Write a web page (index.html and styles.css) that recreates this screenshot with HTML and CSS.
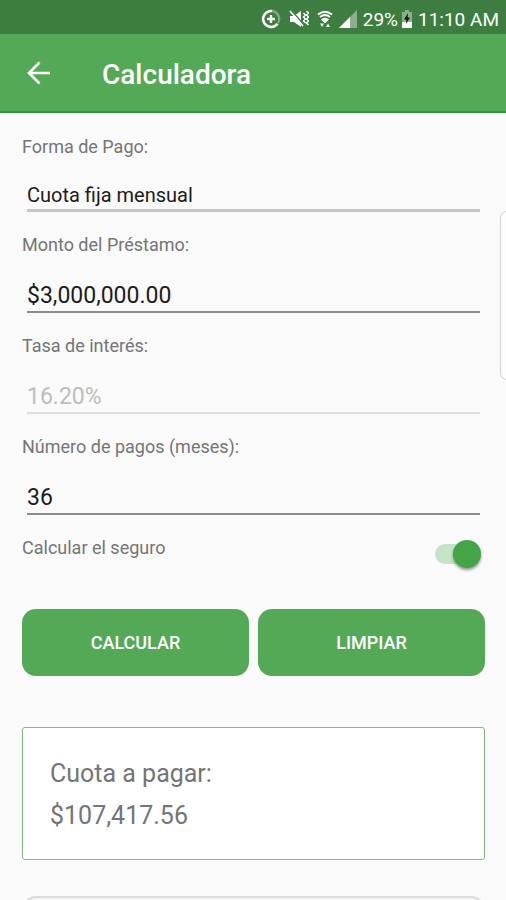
FILE: index.html
```html
<!DOCTYPE html>
<html lang="es">
<head>
    <meta charset="UTF-8">
    <meta name="viewport" content="width=device-width, initial-scale=1.0">
    <title>Calculadora</title>
    <link rel="stylesheet" href="styles.css">
</head>
<body>

    <!-- Barra de estado -->
    <div class="status-bar">
        <svg class="icon-saver" width="20" height="20" viewBox="0 0 20 20" fill="none" stroke="#fff">
            <path d="M11 2A8 8 0 0 1 17 14" stroke-width="2.400" opacity="0.35"/>
            <path d="M11 2A8 8 0 1 0 16.500 14.800" stroke-width="2.600"/>
            <path d="M10 6v8M6 10h8" stroke-width="2.400"/>
        </svg>
        <svg class="icon-mute" width="20" height="18" viewBox="0 0 20 18" fill="#fff">
            <path d="M1 6h4l7-5v16l-7-5H1z"/>
            <path d="M3 1l12 14" stroke="#3d7d40" stroke-width="1.400"/>
            <path d="M1 1l13 15" stroke="#fff" stroke-width="1.600"/>
            <path d="M14.500 3l2 2-2 2 2 2-2 2 2 2M17.500 1l2 2-2 2 2 2-2 2 2 2-2 2 2 2" fill="none" stroke="#fff" stroke-width="1.400"/>
        </svg>
        <svg class="icon-wifi" width="16" height="18" viewBox="0 0 16 18" fill="none" stroke="#fff">
            <path d="M1 4.500Q8-1 15 4.500" stroke-width="2"/>
            <path d="M3 7Q8 3 13 7" stroke-width="1.800"/>
            <path d="M4.500 9.500Q8 6.500 11.500 9.500L8 13z" fill="#fff" stroke-width="1"/>
            <path d="M3 13.500h4L5 17zM9 17h4l-2-3.500z" fill="#fff" stroke="none"/>
        </svg>
        <svg class="icon-signal" width="18" height="18" viewBox="0 0 18 18" fill="#fff">
            <path d="M0 18L18 0v18z" opacity="0.4"/>
            <path d="M0 18L11 7v11z"/>
        </svg>
        <span>29%</span>
        <svg class="icon-battery" width="12" height="18" viewBox="0 0 12 18">
            <path d="M4 0h4v2h3v10H1V2h3z" fill="#fff" opacity="0.4"/>
            <path d="M1 12h10v6H1z" fill="#fff"/>
            <path d="M7 3L3 9.500h2.500L5 14l4-6.500H6.500z" fill="#111"/>
        </svg>
        <span>11:10 AM</span>
    </div>

    <!-- Encabezado -->
    <header class="app-bar">
        <button type="button" class="back-btn" aria-label="Volver">
            <svg width="24" height="24" viewBox="0 0 24 24" fill="none" stroke="#fff" stroke-width="2.600">
                <path d="M23 12H2M12.500 1.500L2 12l10.500 10.500"/>
            </svg>
        </button>
        <h1>Calculadora</h1>
    </header>

    <main class="container">
        <form class="loan-form">
            <div class="field">
                <label for="formaPago">Forma de Pago:</label>
                <select id="formaPago">
                    <option>Cuota fija mensual</option>
                </select>
            </div>
            <div class="field">
                <label for="monto">Monto del Préstamo:</label>
                <input type="text" id="monto" value="$3,000,000.00">
            </div>
            <div class="field">
                <label for="tasa">Tasa de interés:</label>
                <input type="text" id="tasa" value="16.20%" disabled>
            </div>
            <div class="field">
                <label for="pagos">Número de pagos (meses):</label>
                <input type="text" id="pagos" value="36">
            </div>
            <div class="switch-row">
                <label for="seguro">Calcular el seguro</label>
                <input type="checkbox" class="switch" id="seguro" checked>
            </div>
            <div class="buttons">
                <button type="button">CALCULAR</button>
                <button type="reset">LIMPIAR</button>
            </div>
        </form>

        <!-- Resultado -->
        <div class="result-card">
            <p>Cuota a pagar:</p>
            <p>$107,417.56</p>
        </div>

        <div class="next-card"></div>
    </main>

    <!-- Panel lateral -->
    <div class="edge-handle"></div>

</body>
</html>
```

FILE: styles.css
```css
/* General */
* {
    box-sizing: border-box;
}

body {
    position: relative;
    height: 100vh;
    margin: 0;
    overflow: hidden;
    background-color: #fafafa;
    font-family: Roboto, sans-serif;
    color: #757575;
}

/* Barra de estado */
.status-bar {
    display: flex;
    align-items: center;
    justify-content: flex-end;
    height: 34px;
    padding: 4px 7px 0 0;
    background-color: #3d7d40;
    color: #fff;
    font-size: 19px;
}

.icon-saver,
.icon-mute {
    margin-right: 8px;
}

.icon-wifi,
.icon-signal {
    margin-right: 6px;
}

.icon-battery {
    margin: 0 5px 0 3px;
}

/* Encabezado */
.app-bar {
    display: flex;
    align-items: center;
    height: 79px;
    padding: 0 27px;
    background-color: #54a957;
    border-bottom: 2px solid #2f9a35;
}

.app-bar h1 {
    margin: 4px 0 0;
    font-size: 28px;
    font-weight: 500;
    color: #fff;
}

.back-btn {
    display: flex;
    margin-right: 51px;
    padding: 0;
    border: none;
    background: none;
    cursor: pointer;
}

/* Formulario */
.container {
    padding: 22px 21px 0 22px;
}

.field {
    display: flex;
    flex-direction: column;
    margin-bottom: 21px;
}

label {
    font-size: 18px;
    line-height: 24px;
}

.field input,
.field select {
    height: 56px;
    margin: 0 5px;
    padding: 22px 0 0;
    border: none;
    border-bottom: 2px solid #8c8c8c;
    border-radius: 0;
    outline: none;
    background: none;
    font-family: inherit;
    font-size: 23px;
    color: #1c1c1c;
}

.field select {
    height: 53px;
    border-bottom: 3px solid #c6c6c6;
    appearance: none;
    font-size: 20px;
}

.field input:disabled {
    border-bottom-color: #dedede;
    color: #bdbdbd;
}

.switch-row {
    display: flex;
    justify-content: space-between;
    padding-right: 4px;
}

/* Interruptor */
.switch {
    display: flex;
    align-items: center;
    justify-content: flex-end;
    width: 46px;
    height: 20px;
    margin: 8px 0 0;
    appearance: none;
    border-radius: 10px;
    background-color: #c5e4c7;
    cursor: pointer;
}

.switch::before {
    content: "";
    width: 28px;
    height: 28px;
    flex-shrink: 0;
    border-radius: 50%;
    background-color: #43a548;
    box-shadow: 0 2px 3px rgba(0, 0, 0, 0.4);
}

.switch:not(:checked) {
    justify-content: flex-start;
}

.buttons {
    display: flex;
    gap: 9px;
    margin-top: 45px;
}

.buttons button {
    flex: 1;
    height: 67px;
    border: none;
    border-radius: 14px;
    background-color: #54a957;
    font-family: inherit;
    font-size: 18px;
    font-weight: 500;
    color: #fff;
    cursor: pointer;
}

/* Resultado */
.result-card {
    margin-top: 51px;
    padding: 25px 27px 22px;
    border: 1px solid #7dbb80;
    border-radius: 3px;
    background-color: #fff;
}

.result-card p {
    margin: 0;
    font-size: 25px;
    line-height: 42px;
}

.next-card {
    height: 60px;
    margin-top: 36px;
    border: 2px solid #dcdcdc;
    border-radius: 14px;
    background-color: #f3f3f3;
}

/* Panel lateral */
.edge-handle {
    position: absolute;
    top: 211px;
    right: -8px;
    width: 14px;
    height: 169px;
    border: 1px solid #d2d2d2;
    border-radius: 7px;
    background-color: #fdfdfd;
}
```
